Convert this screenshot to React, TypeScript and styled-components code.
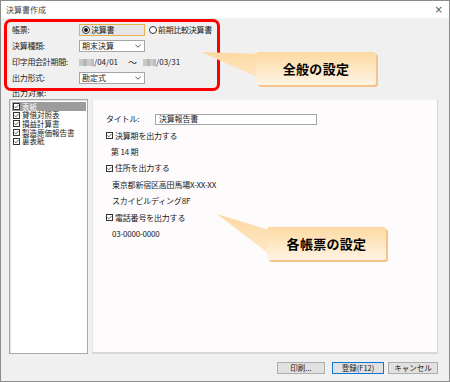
import React from "react";
import styled, { createGlobalStyle } from "styled-components";

const Global = createGlobalStyle`
  html, body { margin: 0; padding: 0; background: #ffffff; }
  body { font-family: "Noto Sans CJK JP", "Noto Sans", sans-serif; }
  * { box-sizing: border-box; }
`;

const Window = styled.div`
  position: relative;
  width: 450px;
  height: 382px;
  border: 1px solid #8c8c8c;
  display: flex;
  flex-direction: column;
  background: #f0f0f0;
  overflow: hidden;
  font-family: "Noto Sans CJK JP", "Noto Sans", sans-serif;
  font-size: 8px;
  color: #1a1a1a;
`;

const TitleBar = styled.div`
  height: 17px;
  background: #ffffff;
  display: flex;
  align-items: center;
  justify-content: space-between;
  padding: 0 6px 0 5px;
  color: #444;
  font-size: 8px;
`;

const CloseX = styled.span`
  font-family: "DejaVu Sans", sans-serif;
  font-size: 10px;
  color: #555;
  line-height: 1;
`;

const Body = styled.div`
  flex: 1;
  display: flex;
  flex-direction: column;
  padding: 6px 11px 7px 8px;
`;

const Settings = styled.div`
  display: flex;
  flex-direction: column;
  gap: 4px;
  padding-left: 3px;
`;

const Row = styled.div`
  display: grid;
  grid-template-columns: 67px 1fr;
  align-items: center;
  height: 12px;
`;

const Label = styled.span`
  line-height: 1;
  white-space: nowrap;
  letter-spacing: -0.3px;
`;

const Controls = styled.div`
  display: flex;
  align-items: center;
  height: 12px;
`;

const RadioBox = styled.div<{ $focused?: boolean }>`
  display: flex;
  align-items: center;
  gap: 1px;
  height: 12px;
  width: ${(p) => (p.$focused ? "66px" : "auto")};
  padding-left: 2px;
  border: 1px solid ${(p) => (p.$focused ? "#e8b04a" : "transparent")};
  background: ${(p) => (p.$focused ? "#e6e6e6" : "transparent")};
  margin-right: 1px;
  line-height: 1;
  letter-spacing: -0.3px;
`;

const RadioCircle = styled.span<{ $on?: boolean }>`
  width: 8px;
  height: 8px;
  border-radius: 50%;
  border: 1px solid #333;
  background: #fff;
  display: flex;
  align-items: center;
  justify-content: center;
  flex-shrink: 0;
  &::after {
    content: "";
    width: 4px;
    height: 4px;
    border-radius: 50%;
    background: ${(p) => (p.$on ? "#111" : "transparent")};
  }
`;

const Select = styled.div`
  width: 66px;
  height: 12px;
  background: #fff;
  border: 1px solid #a6a6a6;
  display: flex;
  align-items: center;
  justify-content: space-between;
  padding: 0 3px 0 2px;
  line-height: 1;
`;

const Chevron = () => (
  <svg width="6" height="4" viewBox="0 0 6 4">
    <path d="M0.5 0.8 L3 3.2 L5.5 0.8" fill="none" stroke="#444" strokeWidth="0.9" />
  </svg>
);

const Mosaic = styled.span<{ $w: number }>`
  display: inline-block;
  width: ${(p) => p.$w}px;
  height: 7px;
  background: linear-gradient(90deg, #c9c9c9 0 30%, #b5b5b5 30% 55%, #cccccc 55% 80%, #bdbdbd 80%);
`;

const DateText = styled.span`
  line-height: 1;
`;

const Tilde = styled.span`
  margin: 0 6px 0 10px;
  font-size: 9px;
  line-height: 1;
`;

const SectionLabel = styled.div`
  margin-top: 4px;
  height: 9px;
  padding-left: 3px;
  line-height: 9px;
`;

const Main = styled.div`
  flex: 1;
  margin-top: 2px;
  display: flex;
  gap: 4px;
`;

const List = styled.div`
  width: 79px;
  background: #fff;
  border: 1px solid #a8a8a8;
  box-shadow: inset 1px 1px 0 #e2e2e2;
  padding: 2px 1px 0 2px;
  display: flex;
  flex-direction: column;
  font-size: 7.5px;
`;

const ListItem = styled.div<{ $selected?: boolean }>`
  height: 8.7px;
  display: flex;
  align-items: center;
  gap: 2px;
  padding-left: 1px;
  background: ${(p) => (p.$selected ? "#9c9c9c" : "transparent")};
  color: ${(p) => (p.$selected ? "#ffffff" : "#1a1a1a")};
  line-height: 1;
  white-space: nowrap;
  overflow: hidden;
`;

const Check = styled.span<{ $size?: number }>`
  width: ${(p) => p.$size ?? 7}px;
  height: ${(p) => p.$size ?? 7}px;
  border: 1px solid #333;
  background: #fff;
  display: flex;
  align-items: center;
  justify-content: center;
  flex-shrink: 0;
`;

const CheckMark = () => (
  <svg width="6" height="5" viewBox="0 0 6 5">
    <path d="M0.6 2.4 L2.2 4 L5.4 0.8" fill="none" stroke="#222" strokeWidth="0.9" />
  </svg>
);

const Panel = styled.div`
  flex: 1;
  background: #fdfbfc;
  border-left: 1px solid #e4e4e4;
  border-top: 1px solid #f4f4f4;
  border-bottom: 2px solid #d8d8d8;
  border-right: 1px solid #d8d8d8;
  padding: 11px 0 0 13px;
  display: flex;
  flex-direction: column;
`;

const PanelRow = styled.div<{ $indent?: number }>`
  height: 16.4px;
  display: flex;
  align-items: center;
  padding-left: ${(p) => p.$indent ?? 0}px;
  line-height: 1;
  white-space: nowrap;
  gap: 2px;
  letter-spacing: -0.2px;
`;

const TitleLabel = styled.span`
  width: 47px;
`;

const TextInput = styled.div`
  width: 162px;
  height: 11px;
  background: #fff;
  border: 1px solid #a6a6a6;
  display: flex;
  align-items: center;
  padding-left: 3px;
`;

const Footer = styled.div`
  margin-top: 8px;
  display: flex;
  justify-content: flex-end;
  height: 12px;
`;

const Button = styled.div<{ $w: number; $primary?: boolean; $ml?: number }>`
  width: ${(p) => p.$w}px;
  margin-left: ${(p) => p.$ml ?? 0}px;
  height: 12px;
  background: #e1e1e1;
  border: 1px solid ${(p) => (p.$primary ? "#0a78d4" : "#adadad")};
  display: flex;
  align-items: center;
  justify-content: center;
  line-height: 1;
  font-size: 7.5px;
`;

const RedFrame = styled.div`
  position: absolute;
  left: 3px;
  top: 18px;
  width: 216px;
  height: 72px;
  border: 3px solid #ff0000;
  border-radius: 7px;
  pointer-events: none;
`;

const CalloutBody = styled.div<{ $x: number; $y: number; $w: number; $h: number }>`
  position: absolute;
  left: ${(p) => p.$x}px;
  top: ${(p) => p.$y}px;
  width: ${(p) => p.$w}px;
  height: ${(p) => p.$h}px;
  border-radius: 3px;
  background: linear-gradient(180deg, #fdd9a2 0%, #fee8c6 55%, #fff4e4 100%);
  box-shadow: 2px 2px 0 #f6c489;
  display: flex;
  align-items: center;
  justify-content: center;
  font-weight: 700;
  font-size: 13px;
  color: #000;
  letter-spacing: 0.3px;
`;

const Tail = styled.svg`
  position: absolute;
  left: 0;
  top: 0;
  pointer-events: none;
`;

export default function App() {
  return (
    <>
      <Global />
      <Window>
        <TitleBar>
          <span>決算書作成</span>
          <CloseX>×</CloseX>
        </TitleBar>
        <Body>
          <Settings>
            <Row>
              <Label>帳票:</Label>
              <Controls>
                <RadioBox $focused>
                  <RadioCircle $on />
                  <span>決算書</span>
                </RadioBox>
                <RadioBox>
                  <RadioCircle />
                  <span>前期比較決算書</span>
                </RadioBox>
              </Controls>
            </Row>
            <Row>
              <Label>決算種類:</Label>
              <Select>
                <span>期末決算</span>
                <Chevron />
              </Select>
            </Row>
            <Row>
              <Label>印字用会計期間:</Label>
              <Controls>
                <Mosaic $w={15} />
                <DateText>/04/01</DateText>
                <Tilde>〜</Tilde>
                <Mosaic $w={13} />
                <DateText>/03/31</DateText>
              </Controls>
            </Row>
            <Row>
              <Label>出力形式:</Label>
              <Select>
                <span>勘定式</span>
                <Chevron />
              </Select>
            </Row>
          </Settings>
          <SectionLabel>出力対象:</SectionLabel>
          <Main>
            <List>
              {["表紙", "貸借対照表", "損益計算書", "製造原価報告書", "裏表紙"].map((t, i) => (
                <ListItem key={t} $selected={i === 0}>
                  <Check>
                    <CheckMark />
                  </Check>
                  <span>{t}</span>
                </ListItem>
              ))}
            </List>
            <Panel>
              <PanelRow>
                <TitleLabel>タイトル:</TitleLabel>
                <TextInput>決算報告書</TextInput>
              </PanelRow>
              <PanelRow>
                <Check>
                  <CheckMark />
                </Check>
                <span>決算期を出力する</span>
              </PanelRow>
              <PanelRow $indent={5}>第 14 期</PanelRow>
              <PanelRow>
                <Check>
                  <CheckMark />
                </Check>
                <span>住所を出力する</span>
              </PanelRow>
              <PanelRow $indent={6}>東京都新宿区高田馬場X-XX-XX</PanelRow>
              <PanelRow $indent={6}>スカイビルディング8F</PanelRow>
              <PanelRow>
                <Check>
                  <CheckMark />
                </Check>
                <span>電話番号を出力する</span>
              </PanelRow>
              <PanelRow $indent={6}>03-0000-0000</PanelRow>
            </Panel>
          </Main>
          <Footer>
            <Button $w={48}>印刷...</Button>
            <Button $w={52} $ml={7} $primary>
              登録(F12)
            </Button>
            <Button $w={50} $ml={4}>
              キャンセル
            </Button>
          </Footer>
        </Body>

        <RedFrame />

        <Tail width="450" height="382" viewBox="0 0 450 382">
          <defs>
            <linearGradient id="tg1" x1="0" y1="51" x2="0" y2="77" gradientUnits="userSpaceOnUse">
              <stop offset="0" stopColor="#fdd9a2" />
              <stop offset="1" stopColor="#fee6c2" />
            </linearGradient>
            <linearGradient id="tg2" x1="0" y1="213" x2="0" y2="253" gradientUnits="userSpaceOnUse">
              <stop offset="0" stopColor="#fdd9a2" />
              <stop offset="1" stopColor="#fee8c8" />
            </linearGradient>
          </defs>
          <polygon points="200,51 258,53 258,77" fill="url(#tg1)" />
          <polygon points="216,213 268,229 268,253" fill="url(#tg2)" />
        </Tail>
        <CalloutBody $x={255} $y={51} $w={120} $h={33}>
          全般の設定
        </CalloutBody>
        <CalloutBody $x={266} $y={226} $w={119} $h={33}>
          各帳票の設定
        </CalloutBody>
      </Window>
    </>
  );
}
